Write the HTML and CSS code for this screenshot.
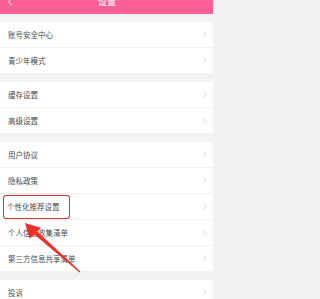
FILE: index.html
```html
<!DOCTYPE html>
<html lang="zh">
<head>
<meta charset="utf-8">
<link rel="stylesheet" href="styles.css">
</head>
<body>
<div class="page">
  <header class="topbar">
    <svg class="back" width="6" height="8" viewBox="0 0 6 8"><path d="M4.5 0.5 L1.5 4 L4.5 7.5" fill="none" stroke="#fff" stroke-width="1"/></svg>
    <div class="title">设置</div>
  </header>
  <section class="group">
    <div class="row"><span class="label">账号安全中心</span><svg class="chev" viewBox="0 0 4 7"><path d="M0.6 0.6 L3.2 3.5 L0.6 6.4" fill="none" stroke="#cfcfcf" stroke-width="0.8"/></svg></div>
    <div class="row"><span class="label">青少年模式</span><svg class="chev" viewBox="0 0 4 7"><path d="M0.6 0.6 L3.2 3.5 L0.6 6.4" fill="none" stroke="#cfcfcf" stroke-width="0.8"/></svg></div>
  </section>
  <section class="group">
    <div class="row"><span class="label">缓存设置</span><svg class="chev" viewBox="0 0 4 7"><path d="M0.6 0.6 L3.2 3.5 L0.6 6.4" fill="none" stroke="#cfcfcf" stroke-width="0.8"/></svg></div>
    <div class="row"><span class="label">高级设置</span><svg class="chev" viewBox="0 0 4 7"><path d="M0.6 0.6 L3.2 3.5 L0.6 6.4" fill="none" stroke="#cfcfcf" stroke-width="0.8"/></svg></div>
  </section>
  <section class="group">
    <div class="row"><span class="label">用户协议</span><svg class="chev" viewBox="0 0 4 7"><path d="M0.6 0.6 L3.2 3.5 L0.6 6.4" fill="none" stroke="#cfcfcf" stroke-width="0.8"/></svg></div>
    <div class="row"><span class="label">隐私政策</span><svg class="chev" viewBox="0 0 4 7"><path d="M0.6 0.6 L3.2 3.5 L0.6 6.4" fill="none" stroke="#cfcfcf" stroke-width="0.8"/></svg></div>
    <div class="row"><span class="label highlight">个性化推荐设置</span><svg class="chev" viewBox="0 0 4 7"><path d="M0.6 0.6 L3.2 3.5 L0.6 6.4" fill="none" stroke="#cfcfcf" stroke-width="0.8"/></svg></div>
    <div class="row"><span class="label">个人信息收集清单</span><svg class="chev" viewBox="0 0 4 7"><path d="M0.6 0.6 L3.2 3.5 L0.6 6.4" fill="none" stroke="#cfcfcf" stroke-width="0.8"/></svg></div>
    <div class="row"><span class="label">第三方信息共享清单</span><svg class="chev" viewBox="0 0 4 7"><path d="M0.6 0.6 L3.2 3.5 L0.6 6.4" fill="none" stroke="#cfcfcf" stroke-width="0.8"/></svg></div>
  </section>
  <section class="group">
    <div class="row"><span class="label">投诉</span><svg class="chev" viewBox="0 0 4 7"><path d="M0.6 0.6 L3.2 3.5 L0.6 6.4" fill="none" stroke="#cfcfcf" stroke-width="0.8"/></svg></div>
  </section>
  <svg class="pointer" width="213" height="299" viewBox="0 0 213 299">
    <polygon points="25,223 41,227.8 37.2,231.4 80.4,271.6 79.6,272.4 34.4,234.6 29.5,238.5" fill="#ec2f2b"/>
  </svg>
</div>
</body>
</html>
```

FILE: styles.css
```css
html, body {
  margin: 0;
  padding: 0;
}
body {
  background: #f2f2f2;
  font-family: "Noto Sans CJK SC", "Noto Sans", sans-serif;
  overflow: hidden;
}
.page {
  position: relative;
  width: 213px;
  height: 299px;
  overflow: hidden;
  background: #f2f2f2;
}
.topbar {
  height: 14px;
  background: #ff5f94;
  display: flex;
  align-items: flex-start;
  justify-content: center;
  position: relative;
  overflow: hidden;
}
.back {
  position: absolute;
  left: 7px;
  top: -2px;
}
.title {
  color: #fff;
  font-size: 9px;
  line-height: 9px;
  margin-top: -3px;
  margin-left: 1px;
}
.group {
  background: #fff;
  margin-top: 8px;
}
.group + .group {
  margin-top: 9px;
}
.row {
  height: 25px;
  display: flex;
  align-items: center;
  justify-content: space-between;
  padding: 0 6px 0 8px;
  border-bottom: 1px solid #f1f1f1;
}
.row:last-child {
  border-bottom: none;
}
.label {
  font-size: 7.5px;
  line-height: 10px;
  color: #4a4a4a;
}
.highlight {
  outline: 1px solid #e0302c;
  outline-offset: 0;
  border-radius: 2px;
  padding: 6px 9px 6px 3px;
  margin-left: -4px;
  box-shadow: 0 0 0 1px rgba(224, 48, 44, 0.5);
}
.chev {
  width: 4px;
  height: 7px;
}
.pointer {
  position: absolute;
  left: 0;
  top: 0;
}
```
